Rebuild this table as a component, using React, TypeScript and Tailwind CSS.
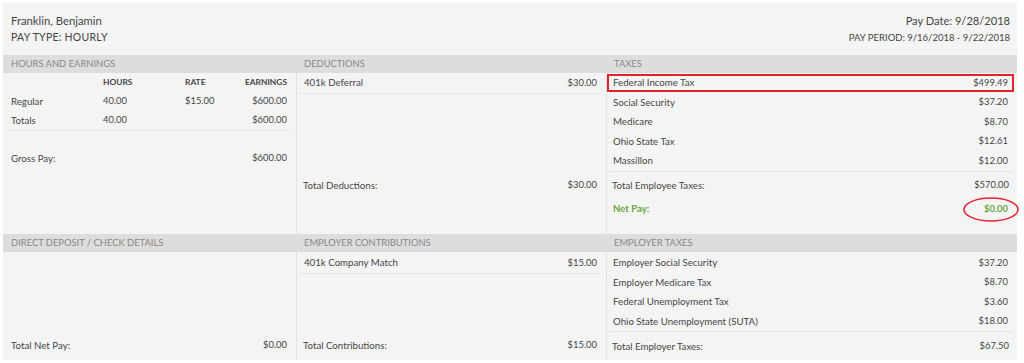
import React from "react";

const font = { fontFamily: "Lato, 'Open Sans', sans-serif" };

function Bar({ title }: { title: string }) {
  return (
    <div className="h-[18px] bg-[#dddddd] pl-[8px] flex items-center text-[9.4px] text-[#888888] uppercase">
      {title}
    </div>
  );
}

function Row({ label, amount, h = "h-[19.5px]" }: { label: string; amount: string; h?: string }) {
  return (
    <div className={`${h} flex items-center justify-between text-[#464646]`}>
      <span className="text-[9.7px]">{label}</span>
      <span className="text-[9.4px]">{amount}</span>
    </div>
  );
}

export default function App() {
  return (
    <div className="w-[1024px] h-[363px] bg-white p-[3px]" style={font}>
      <div className="w-[1014px] h-[357px] bg-[#f4f4f4]">
        {/* header */}
        <div className="h-[52px] flex justify-between pl-[8px] pr-[7px] pt-[9px] text-[#444444]">
          <div>
            <div className="text-[11.3px] leading-[18px]">Franklin, Benjamin</div>
            <div className="text-[10.5px] leading-[15px] tracking-[0.25px]">PAY TYPE: HOURLY</div>
          </div>
          <div className="text-right">
            <div className="text-[11.1px] leading-[18px]">Pay Date: 9/28/2018</div>
            <div className="text-[9.5px] leading-[15px]">PAY PERIOD: 9/16/2018 - 9/22/2018</div>
          </div>
        </div>

        {/* section 1 */}
        <div className="grid grid-cols-[293px_310px_411px]">
          <div>
            <Bar title="Hours and Earnings" />
            <div className="h-[161px] flex flex-col">
              <div className="ml-[3px] mr-[5px] border-b border-[#e4e4e4]">
                <div className="h-[19px] pl-[5px] pr-[4px] grid grid-cols-[92px_82px_1fr_auto] items-center text-[8.4px] font-bold text-[#464646]">
                  <span></span>
                  <span>HOURS</span>
                  <span>RATE</span>
                  <span>EARNINGS</span>
                </div>
                <div className="h-[19px] pl-[5px] pr-[4px] grid grid-cols-[92px_82px_1fr_auto] items-center text-[9.4px] text-[#464646]">
                  <span className="text-[9.7px]">Regular</span>
                  <span>40.00</span>
                  <span>$15.00</span>
                  <span>$600.00</span>
                </div>
                <div className="h-[19px] pl-[5px] pr-[4px] grid grid-cols-[92px_82px_1fr_auto] items-center text-[9.4px] text-[#464646]">
                  <span className="text-[9.7px]">Totals</span>
                  <span>40.00</span>
                  <span></span>
                  <span>$600.00</span>
                </div>
              </div>
              <div className="mt-[17px] ml-[3px] mr-[5px] pl-[5px] pr-[4px]">
                <Row label="Gross Pay:" amount="$600.00" h="h-[20px]" />
              </div>
            </div>
          </div>

          <div>
            <Bar title="Deductions" />
            <div className="h-[161px] border-l border-[#e2e2e2] flex flex-col">
              <div className="ml-[3px] mr-[5px] pl-[4px] pr-[4px] border-b border-[#e4e4e4]">
                <Row label="401k Deferral" amount="$30.00" />
              </div>
              <div className="mt-[78px] ml-[3px] mr-[5px] pl-[3px] pr-[4px]">
                <Row label="Total Deductions:" amount="$30.00" h="h-[27px]" />
              </div>
            </div>
          </div>

          <div>
            <Bar title="Taxes" />
            <div className="relative h-[161px] border-l border-[#e2e2e2] flex flex-col">
              <div className="ml-[3px] mr-[5px] pl-[3px] pr-[4px] border-b border-[#e4e4e4]">
                <Row label="Federal Income Tax" amount="$499.49" />
                <Row label="Social Security" amount="$37.20" />
                <Row label="Medicare" amount="$8.70" />
                <Row label="Ohio State Tax" amount="$12.61" />
                <Row label="Massillon" amount="$12.00" />
              </div>
              <div className="ml-[3px] mr-[5px] pl-[2px] pr-[3px]">
                <Row label="Total Employee Taxes:" amount="$570.00" h="h-[27px]" />
                <div className="h-[21.5px] flex items-center justify-between font-bold text-[#6aa641] pl-[1px] pr-[1px]">
                  <span className="text-[9.6px]">Net Pay:</span>
                  <span className="text-[9.4px]">$0.00</span>
                </div>
              </div>
              <div className="absolute left-0 right-[3px] top-[1px] h-[18px] border-2 border-[#e3222b]" />
              <svg className="absolute left-[356px] top-[124px] overflow-visible" width="56" height="25" viewBox="0 0 56 25">
                <ellipse cx="28" cy="12.5" rx="27" ry="11.5" fill="none" stroke="#e3222b" strokeWidth="1.6" />
              </svg>
            </div>
          </div>
        </div>

        {/* section 2 */}
        <div className="grid grid-cols-[293px_310px_411px]">
          <div>
            <Bar title="Direct Deposit / Check Details" />
            <div className="h-[107px] flex flex-col">
              <div className="mt-auto ml-[3px] mr-[5px] pl-[5px] pr-[4px]">
                <Row label="Total Net Pay:" amount="$0.00" h="h-[28px]" />
              </div>
            </div>
          </div>

          <div>
            <Bar title="Employer Contributions" />
            <div className="h-[107px] border-l border-[#e2e2e2] flex flex-col pt-[1px]">
              <div className="ml-[3px] mr-[5px] pl-[4px] pr-[4px] border-b border-[#e4e4e4]">
                <Row label="401k Company Match" amount="$15.00" />
              </div>
              <div className="mt-auto ml-[3px] mr-[5px] pl-[3px] pr-[4px]">
                <Row label="Total Contributions:" amount="$15.00" h="h-[28px]" />
              </div>
            </div>
          </div>

          <div>
            <Bar title="Employer Taxes" />
            <div className="h-[107px] border-l border-[#e2e2e2] flex flex-col pt-[1px]">
              <div className="ml-[3px] mr-[5px] pl-[3px] pr-[4px] border-b border-[#e4e4e4]">
                <Row label="Employer Social Security" amount="$37.20" />
                <Row label="Employer Medicare Tax" amount="$8.70" />
                <Row label="Federal Unemployment Tax" amount="$3.60" />
                <Row label="Ohio State Unemployment (SUTA)" amount="$18.00" />
              </div>
              <div className="mt-auto ml-[3px] mr-[5px] pl-[2px] pr-[3px]">
                <Row label="Total Employer Taxes:" amount="$67.50" h="h-[28px]" />
              </div>
            </div>
          </div>
        </div>
      </div>
    </div>
  );
}
